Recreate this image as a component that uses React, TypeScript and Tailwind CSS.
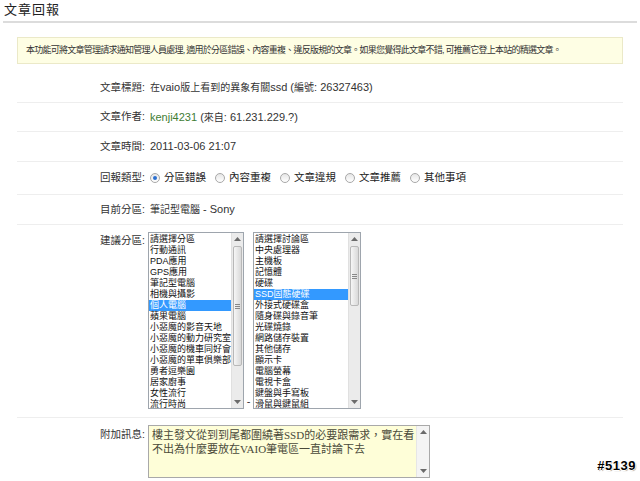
import React from 'react';

const leftItems = [
  '請選擇分區', '行動通訊', 'PDA應用', 'GPS應用', '筆記型電腦', '相機與攝影', '個人電腦', '蘋果電腦',
  '小惡魔的影音天地', '小惡魔的動力研究室', '小惡魔的機車同好會', '小惡魔的單車俱樂部', '勇者逗樂園', '居家廚事', '女性流行', '流行時尚',
];
const rightItems = [
  '請選擇討論區', '中央處理器', '主機板', '記憶體', '硬碟', 'SSD固態硬碟', '外接式硬碟盒', '隨身碟與錄音筆',
  '光碟燒錄', '網路儲存裝置', '其他儲存', '顯示卡', '電腦螢幕', '電視卡盒', '鍵盤與手寫板', '滑鼠與鍵鼠組',
];

const Arrow = ({ down }: { down?: boolean }) => (
  <svg width="7" height="4" viewBox="0 0 7 4" className="block">
    <path d={down ? 'M0 0h7L3.5 4z' : 'M0 4h7L3.5 0z'} fill="#6b6b6b" />
  </svg>
);

const Scrollbar = ({ thumbTop, thumbH }: { thumbTop: number; thumbH: number }) => (
  <div className="relative w-[12px] h-full bg-[#ebebeb] border-l border-[#e0e0e0] shrink-0">
    <div className="h-[12px] flex items-center justify-center"><Arrow /></div>
    <div
      className="absolute left-[1px] right-[1px] rounded-[2px] border border-[#b8b8b8] bg-gradient-to-r from-[#f6f6f6] to-[#d9d9d9] flex items-center justify-center"
      style={{ top: thumbTop, height: thumbH }}
    >
      <div className="flex flex-col gap-[1px]">
        <div className="w-[5px] h-[1px] bg-[#888]" />
        <div className="w-[5px] h-[1px] bg-[#888]" />
        <div className="w-[5px] h-[1px] bg-[#888]" />
      </div>
    </div>
    <div className="absolute bottom-0 left-0 right-0 h-[12px] flex items-center justify-center"><Arrow down /></div>
  </div>
);

const ListBox = ({ items, selected, width, thumbTop, thumbH }: { items: string[]; selected: number; width: string; thumbTop: number; thumbH: number }) => (
  <div className={`${width} h-[177px] border border-[#9ea5ad] flex bg-white`}>
    <div className="flex-1 min-w-0 pt-[1px] overflow-hidden">
      {items.map((t, i) => (
        <div
          key={t}
          className={`h-[11px] leading-[11px] text-[9px] pl-[1px] whitespace-nowrap ${i === selected ? 'bg-[#3399ff] text-white' : 'text-[#111]'}`}
        >
          {t}
        </div>
      ))}
    </div>
    <Scrollbar thumbTop={thumbTop} thumbH={thumbH} />
  </div>
);

const Radio = ({ checked, label }: { checked?: boolean; label: string }) => (
  <div className="flex items-center w-[65px]">
    <span className="w-[10px] h-[10px] rounded-full border border-[#a8a8a8] bg-gradient-to-b from-[#e6e6e6] to-white flex items-center justify-center">
      {checked && <span className="w-[4px] h-[4px] rounded-full bg-[#2b6fd0]" />}
    </span>
    <span className="ml-[4px] text-[10.5px] text-[#222]">{label}</span>
  </div>
);

const Row = ({ label, h = 'h-[30px]', children }: { label: string; h?: string; children: React.ReactNode }) => (
  <div className={`${h} flex items-center border-b border-[#eeeeee]`}>
    <div className="w-[128px] text-right text-[10.5px] text-[#333]">{label}:</div>
    <div className="ml-[5px] text-[11px] text-[#333] flex items-center whitespace-pre">{children}</div>
  </div>
);

const Cjk = ({ children }: { children: React.ReactNode }) => <span className="text-[10px]">{children}</span>;

export default function App() {
  return (
    <div className="w-[640px] h-[481px] bg-white overflow-hidden relative" style={{ fontFamily: '"Liberation Sans", "Noto Sans CJK TC", sans-serif' }}>
      <div className="h-[21px] pl-[4px] text-[13px] leading-[19px] text-[#222] tracking-[1px]">文章回報</div>
      <div className="mx-[3px] h-[2px] bg-[#dcdcdc]" />

      <div className="mx-[17px] mt-[14px] h-[27px] border border-[#ebe9c8] bg-[#fefee4] flex items-center pl-[8px] text-[9px] tracking-[-0.75px] text-[#333] whitespace-nowrap">
        本功能可將文章管理請求通知管理人員處理, 適用於分區錯誤、內容重複、違反版規的文章。如果您覺得此文章不錯, 可推薦它登上本站的精選文章。
      </div>

      <div className="mx-[17px] mt-[9px]">
        <Row label="文章標題">
          <Cjk>在</Cjk>vaio<Cjk>版上看到的異象有關</Cjk>ssd (<Cjk>編號</Cjk>: 26327463)
        </Row>
        <Row label="文章作者" h="h-[29px]">
          <span className="text-[#3f7d34]">kenji4231</span> (<Cjk>來自</Cjk>: 61.231.229.?)
        </Row>
        <Row label="文章時間">2011-03-06 21:07</Row>
        <Row label="回報類型" h="h-[33px]">
          <Radio checked label="分區錯誤" />
          <Radio label="內容重複" />
          <Radio label="文章違規" />
          <Radio label="文章推薦" />
          <Radio label="其他事項" />
        </Row>
        <Row label="目前分區">
          <Cjk>筆記型電腦</Cjk> - Sony
        </Row>

        <div className="flex pt-[7px] pb-[8px] border-b border-[#eeeeee]">
          <div className="w-[128px] text-right text-[10.5px] text-[#333] pt-[1px]">建議分區:</div>
          <div className="ml-[3px] flex items-end">
            <ListBox items={leftItems} selected={6} width="w-[96px]" thumbTop={13} thumbH={120} />
            <div className="w-[9px] text-center text-[11px] text-[#333] leading-[11px] pb-[2px]">-</div>
            <ListBox items={rightItems} selected={5} width="w-[108px]" thumbTop={13} thumbH={60} />
          </div>
        </div>

        <div className="flex pt-[7px]">
          <div className="w-[128px] text-right text-[10.5px] text-[#333] pt-[2px]">附加訊息:</div>
          <div className="ml-[3px] w-[282px] h-[53px] border border-[#a9a9a9] bg-[#fefed8] flex">
            <div
              className="flex-1 px-[3px] pt-[2px] text-[11px] leading-[14px] text-[#4a4a3a] whitespace-nowrap overflow-hidden"
              style={{ fontFamily: '"Liberation Serif", "Noto Sans CJK TC", serif' }}
            >
              樓主發文從到到尾都圍繞著SSD的必要跟需求，實在看
              <br />
              不出為什麼要放在VAIO筆電區一直討論下去
            </div>
            <div className="w-[13px] h-full bg-[#f4f4f4] border-l border-[#e6e6e6] flex flex-col justify-between items-center py-[4px]">
              <Arrow />
              <Arrow down />
            </div>
          </div>
        </div>
      </div>

      <div
        className="absolute right-[4px] bottom-[6px] text-[13px] font-bold text-black tracking-[0.5px]"
        style={{ textShadow: '1px 0 0 #fff, -1px 0 0 #fff, 0 1px 0 #fff, 0 -1px 0 #fff, 1px 1px 1px #888' }}
      >
        #5139
      </div>
    </div>
  );
}
